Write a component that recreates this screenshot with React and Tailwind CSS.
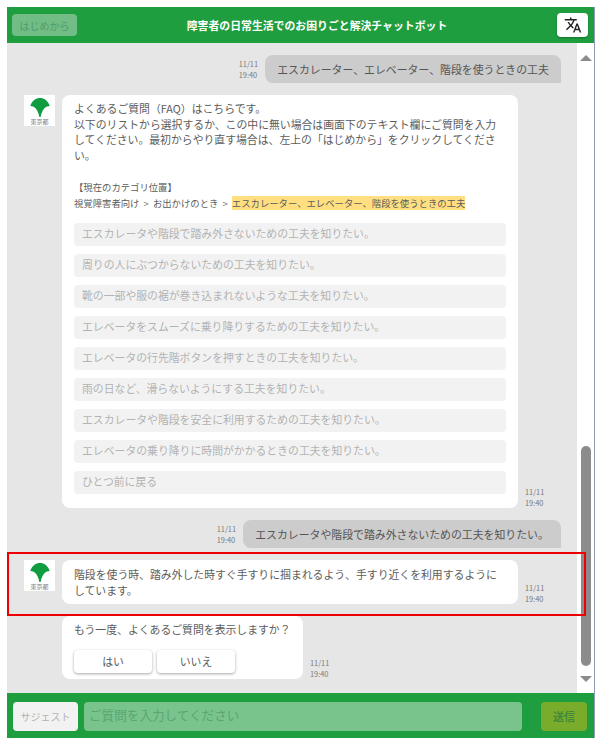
import React from "react";
import { MdTranslate } from "react-icons/md";

function Time({ className = "" }) {
  return (
    <div className={"text-[7.4px] leading-[11px] text-[#7a7a7a] shrink-0 " + className}>
      <div>11/11</div>
      <div>19:40</div>
    </div>
  );
}

function Logo() {
  return (
    <div className="w-[31px] h-[31px] bg-white shrink-0 flex flex-col items-center">
      <svg viewBox="0 0 20 20" className="w-[20px] h-[21px] mt-[2px]">
        <path d="M10 0.5C6 0.5 2 3 0.3 8.5C4 8.6 7.6 11 9.4 19.5H10.6C12.4 11 16 8.6 19.7 8.5C18 3 14 0.5 10 0.5Z" fill="#0f9d3f" />
      </svg>
      <div className="text-[6px] leading-[7px] text-[#808080] whitespace-nowrap">東京都</div>
    </div>
  );
}

function UserMsg({ children, width }) {
  return (
    <div className="flex justify-end items-center gap-[7px] pr-[16px]">
      <Time />
      <div className={"h-[28px] bg-[#cccccc] rounded-t-[8px] rounded-bl-[8px] flex items-center justify-center text-[#555555] text-[10.88px] whitespace-nowrap " + width}>
        {children}
      </div>
    </div>
  );
}

function Sep() {
  return <span className="inline-block w-[13.5px] text-center text-[#777777]">&gt;</span>;
}

const items = [
  "エスカレータや階段で踏み外さないための工夫を知りたい。",
  "周りの人にぶつからないための工夫を知りたい。",
  "靴の一部や服の裾が巻き込まれないような工夫を知りたい。",
  "エレベータをスムーズに乗り降りするための工夫を知りたい。",
  "エレベータの行先階ボタンを押すときの工夫を知りたい。",
  "雨の日など、滑らないようにする工夫を知りたい。",
  "エスカレータや階段を安全に利用するための工夫を知りたい。",
  "エレベータの乗り降りに時間がかかるときの工夫を知りたい。",
  "ひとつ前に戻る",
];

export default function App() {
  return (
    <div
      className="w-[600px] h-[744px] bg-white pt-[7px] pl-[7px] text-[#5c5c5c]"
      style={{ fontFamily: '"Noto Sans CJK JP", "Noto Sans", sans-serif' }}
    >
      <div className="w-[588px] h-[731px] flex flex-col border-r border-[#8f9bb0] relative">
        <header className="h-[36px] bg-[#1f9e40] flex items-center justify-between pl-[5px] pr-[6px] shrink-0">
          <div className="w-[65px] h-[22px] rounded-[4px] bg-[#72bd85] text-[#4f9c68] text-[10px] flex items-center justify-center">
            はじめから
          </div>
          <div className="text-white font-bold text-[10.87px]">障害者の日常生活でのお困りごと解決チャットボット</div>
          <div className="w-[31px] h-[24px] rounded-[4px] bg-white flex items-center justify-center text-[#222222] shadow-[0_1px_2px_rgba(0,0,0,0.3)]">
            <MdTranslate size={18} />
          </div>
        </header>

        <div className="flex-1 flex min-h-0">
          <main className="w-[570px] bg-[#e6e6e6] pt-[12px] flex flex-col gap-[12px] overflow-hidden">
            <UserMsg width="w-[296px]">エスカレーター、エレベーター、階段を使うときの工夫</UserMsg>

            <div className="flex items-start pl-[17px] gap-[7px]">
              <Logo />
              <div className="w-[456px] h-[413px] bg-white rounded-[8px] pt-[6px] px-[12px] shrink-0">
                <div className="text-[10.85px] leading-[15.5px] w-[430px]">
                  よくあるご質問（FAQ）はこちらです。
                  <br />
                  以下のリストから選択するか、この中に無い場合は画面下のテキスト欄にご質問を入力してください。最初からやり直す場合は、左上の「はじめから」をクリックしてください。
                </div>
                <div className="mt-[16px] text-[9.36px] leading-[16px]">【現在のカテゴリ位置】</div>
                <div className="text-[9.36px] leading-[16px] whitespace-nowrap">
                  視覚障害者向け<Sep />お出かけのとき<Sep />
                  <span className="bg-[#ffdf80]">エスカレーター、エレベーター、階段を使うときの工夫</span>
                </div>
                <div className="mt-[12px] flex flex-col gap-[8px]">
                  {items.map((t) => (
                    <div
                      key={t}
                      className="h-[23px] w-[432px] rounded-[4px] bg-[#f2f2f2] text-[#b3b3b3] text-[10.85px] flex items-center pl-[8px] pb-[2px] whitespace-nowrap"
                    >
                      {t}
                    </div>
                  ))}
                </div>
              </div>
              <Time className="self-end" />
            </div>

            <UserMsg width="w-[318px]">エスカレータや階段で踏み外さないための工夫を知りたい。</UserMsg>

            <div className="flex items-start pl-[17px] gap-[7px]">
              <Logo />
              <div className="w-[456px] h-[44px] bg-white rounded-[8px] px-[12px] pt-[7px] text-[10.85px] leading-[15.5px] shrink-0">
                階段を使う時、踏み外した時すぐ手すりに掴まれるよう、手すり近くを利用するようにしています。
              </div>
              <Time className="self-end" />
            </div>

            <div className="flex items-end pl-[55px] gap-[7px]">
              <div className="w-[241px] h-[63px] bg-white rounded-[8px] px-[12px] pt-[6px] shrink-0">
                <div className="text-[10.85px] leading-[15.5px]">もう一度、よくあるご質問を表示しますか？</div>
                <div className="flex gap-[5px] mt-[12px]">
                  <div className="w-[78px] h-[23px] rounded-[4px] bg-white shadow-[0_1px_3px_rgba(0,0,0,0.35)] text-[10.85px] flex items-center justify-center">はい</div>
                  <div className="w-[78px] h-[23px] rounded-[4px] bg-white shadow-[0_1px_3px_rgba(0,0,0,0.35)] text-[10.85px] flex items-center justify-center">いいえ</div>
                </div>
              </div>
              <Time />
            </div>
          </main>

          <aside className="flex-1 bg-white flex flex-col items-center justify-between pt-[12px] pb-[11px] relative">
            <div className="w-0 h-0 border-x-[6px] border-x-transparent border-b-[6px] border-b-[#8c8c8c]" />
            <div className="absolute left-[4px] top-[403px] w-[10px] h-[220px] rounded-full bg-[#8c8c8c]" />
            <div className="w-0 h-0 border-x-[6px] border-x-transparent border-t-[6px] border-t-[#8c8c8c]" />
          </aside>
        </div>

        <footer className="h-[45px] bg-[#1f9e40] shrink-0 flex items-center pl-[6px] pr-[7px] pt-[2px]">
          <div className="w-[65px] h-[29px] rounded-[4px] bg-[#f2f2f2] text-[#b3b3b3] text-[10px] flex items-center justify-center">サジェスト</div>
          <div className="w-[438px] h-[29px] ml-[6px] rounded-[4px] bg-[#79c48c] text-[#5ba474] text-[12.6px] flex items-center pl-[5px] pb-[2px]">ご質問を入力してください</div>
          <div className="w-[46px] h-[29px] ml-auto rounded-[4px] bg-[#7aac2c] text-[#3f8a3a] font-bold text-[11px] flex items-center justify-center">送信</div>
        </footer>

        <div className="absolute left-0 top-[545px] w-[579px] h-[64px] border-2 border-[#ee0000] pointer-events-none" />
      </div>
    </div>
  );
}
